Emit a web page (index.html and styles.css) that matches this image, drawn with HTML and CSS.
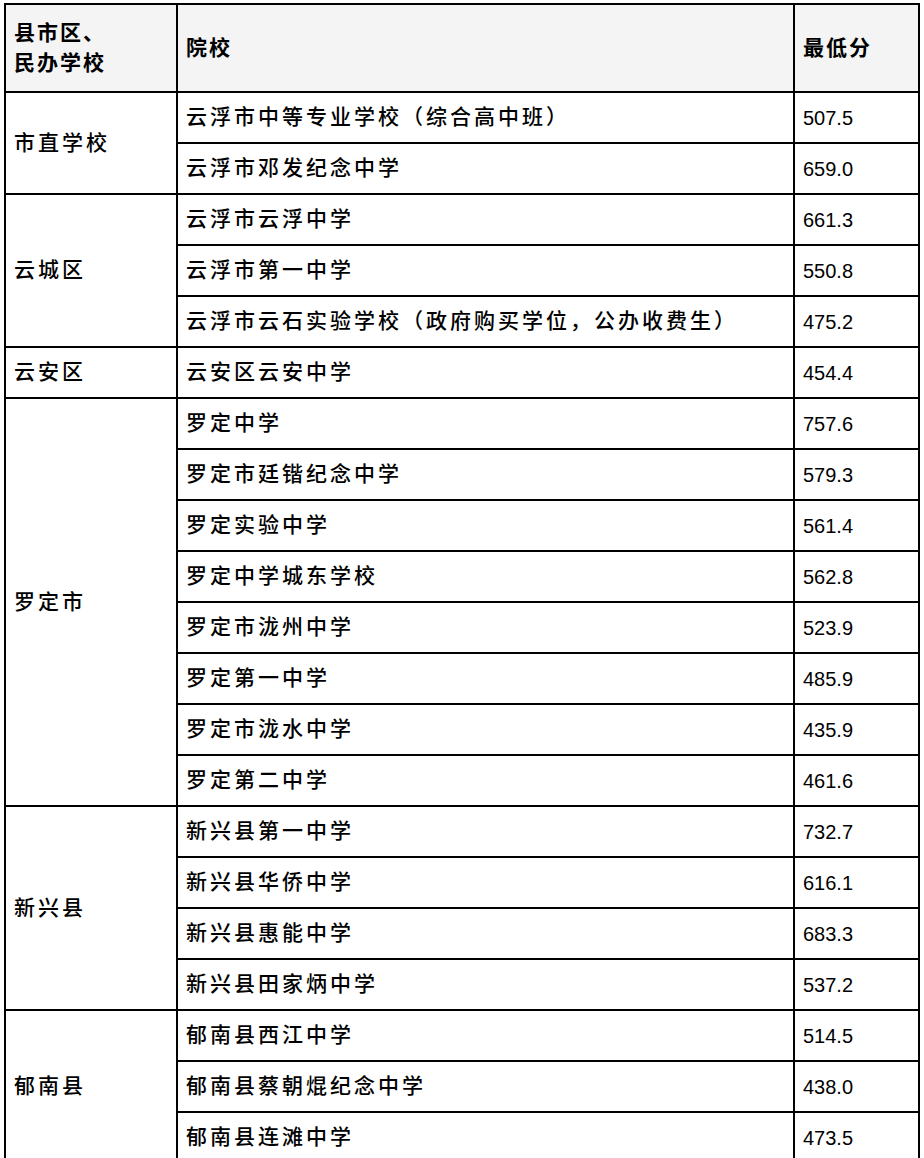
FILE: index.html
```html
<!DOCTYPE html>
<html lang="zh-CN">
<head>
<meta charset="utf-8">
<title>云浮市最低分</title>
<link rel="stylesheet" href="styles.css">
</head>
<body>
<div class="wrap">
<table class="scores">
  <colgroup>
    <col class="c-area">
    <col class="c-school">
    <col class="c-score">
  </colgroup>
  <thead>
    <tr>
      <th>县市区、<br>民办学校</th>
      <th>院校</th>
      <th>最低分</th>
    </tr>
  </thead>
  <tbody>
    <tr><td rowspan="2">市直学校</td><td>云浮市中等专业学校（综合高中班）</td><td class="num">507.5</td></tr>
    <tr><td>云浮市邓发纪念中学</td><td class="num">659.0</td></tr>
    <tr><td rowspan="3">云城区</td><td>云浮市云浮中学</td><td class="num">661.3</td></tr>
    <tr><td>云浮市第一中学</td><td class="num">550.8</td></tr>
    <tr><td>云浮市云石实验学校（政府购买学位，公办收费生）</td><td class="num">475.2</td></tr>
    <tr><td>云安区</td><td>云安区云安中学</td><td class="num">454.4</td></tr>
    <tr><td rowspan="8">罗定市</td><td>罗定中学</td><td class="num">757.6</td></tr>
    <tr><td>罗定市廷锴纪念中学</td><td class="num">579.3</td></tr>
    <tr><td>罗定实验中学</td><td class="num">561.4</td></tr>
    <tr><td>罗定中学城东学校</td><td class="num">562.8</td></tr>
    <tr><td>罗定市泷州中学</td><td class="num">523.9</td></tr>
    <tr><td>罗定第一中学</td><td class="num">485.9</td></tr>
    <tr><td>罗定市泷水中学</td><td class="num">435.9</td></tr>
    <tr><td>罗定第二中学</td><td class="num">461.6</td></tr>
    <tr><td rowspan="4">新兴县</td><td>新兴县第一中学</td><td class="num">732.7</td></tr>
    <tr><td>新兴县华侨中学</td><td class="num">616.1</td></tr>
    <tr><td>新兴县惠能中学</td><td class="num">683.3</td></tr>
    <tr><td>新兴县田家炳中学</td><td class="num">537.2</td></tr>
    <tr><td rowspan="3">郁南县</td><td>郁南县西江中学</td><td class="num">514.5</td></tr>
    <tr><td>郁南县蔡朝焜纪念中学</td><td class="num">438.0</td></tr>
    <tr><td>郁南县连滩中学</td><td class="num">473.5</td></tr>
  </tbody>
</table>
</div>
</body>
</html>
```
FILE: styles.css
```css
html, body {
  margin: 0;
  padding: 0;
  background: #ffffff;
}

body {
  font-family: "Noto Sans CJK SC", "Noto Sans", sans-serif;
  color: #000000;
}

.wrap {
  padding: 3px 0 0 4px;
}

.scores {
  border-collapse: collapse;
  table-layout: fixed;
  width: 914px;
}

.c-area { width: 172px; }
.c-school { width: 617px; }
.c-score { width: 125px; }

.scores th,
.scores td {
  border: 2px solid #000000;
  padding: 0 8px 5px;
  font-size: 21px;
  letter-spacing: 3px;
  text-align: left;
  vertical-align: middle;
  font-weight: 500;
  line-height: 30px;
}

.scores thead tr {
  height: 88px;
}

.scores th {
  background: #f4f4f4;
  font-weight: bold;
  letter-spacing: 2px;
}

.scores tbody tr {
  height: 51px;
}

.scores .num {
  font-family: "Liberation Sans", Arial, sans-serif;
  font-size: 20px;
  font-weight: normal;
  letter-spacing: 0;
  padding-bottom: 0;
}
```
